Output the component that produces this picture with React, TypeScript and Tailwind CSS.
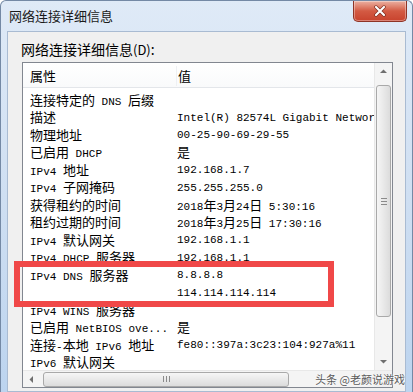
import React from 'react';

interface Row {
  name: string;
  value: string;
}

const rows: Row[] = [
  { name: '连接特定的 DNS 后缀', value: '' },
  { name: '描述', value: 'Intel(R) 82574L Gigabit Network Connection' },
  { name: '物理地址', value: '00-25-90-69-29-55' },
  { name: '已启用 DHCP', value: '是' },
  { name: 'IPv4 地址', value: '192.168.1.7' },
  { name: 'IPv4 子网掩码', value: '255.255.255.0' },
  { name: '获得租约的时间', value: '2018年3月24日 5:30:16' },
  { name: '租约过期的时间', value: '2018年3月25日 17:30:16' },
  { name: 'IPv4 默认网关', value: '192.168.1.1' },
  { name: 'IPv4 DHCP 服务器', value: '192.168.1.1' },
  { name: 'IPv4 DNS 服务器', value: '8.8.8.8' },
  { name: '', value: '114.114.114.114' },
  { name: 'IPv4 WINS 服务器', value: '' },
  { name: '已启用 NetBIOS ove...', value: '是' },
  { name: '连接-本地 IPv6 地址', value: 'fe80::397a:3c23:104:927a%11' },
  { name: 'IPv6 默认网关', value: '' },
];

const CJK = /([\u2E80-\u9FFF\uFF00-\uFFEF]+)/;

// ascii in mono, CJK runs a bit larger like the dialog's bitmap font
const Mixed: React.FC<{ text: string }> = ({ text }) => (
  <>
    {text.split(CJK).map((part, i) =>
      i % 2 === 1 ? (
        <span key={i} className="text-[13px] font-[family-name:Noto_Sans_CJK_SC,sans-serif]">
          {part}
        </span>
      ) : (
        <span key={i}>{part}</span>
      )
    )}
  </>
);

const Arrow: React.FC<{ dir: 'up' | 'down' | 'left' | 'right' }> = ({ dir }) => {
  const pts = {
    up: '5,10 8.5,6.5 12,10',
    down: '5,7 8.5,10.5 12,7',
    left: '10,5 6.5,8.5 10,12',
    right: '7,5 10.5,8.5 7,12',
  }[dir];
  return (
    <svg width="17" height="17" viewBox="0 0 17 17">
      <polygon points={pts} fill="#6f6f6f" />
    </svg>
  );
};

const App: React.FC = () => {
  return (
    <div className="relative w-[413px] h-[392px] overflow-hidden flex flex-col rounded-t-[6px] border-t border-x border-[#7489a5] bg-linear-to-b from-[#dfeaf7] via-[#cfdff2] to-[#bcd4ef] font-[family-name:Noto_Sans_CJK_SC,sans-serif] text-black">
      {/* Title bar */}
      <div className="flex h-[30px] shrink-0 items-start">
        <span className="pl-[8px] pt-[6px] text-[13px] leading-[18px] text-[#1b1b1b]">网络连接详细信息</span>
        <button className="ml-auto mr-[5px] flex h-[21px] w-[54px] items-center justify-center rounded-b-[5px] border border-t-0 border-[#8e3426] bg-linear-to-b from-[#eab0a2] via-[#d35a43] to-[#c8422d] shadow-[inset_0_0_0_1px_rgba(255,255,255,0.35)]">
          <svg width="14" height="12" viewBox="0 0 14 12">
            <path d="M3 2 L11 10 M11 2 L3 10" stroke="#7a2a1e" strokeWidth="3.4" strokeLinecap="round" />
            <path d="M3 2 L11 10 M11 2 L3 10" stroke="#ffffff" strokeWidth="2.2" strokeLinecap="round" />
          </svg>
        </button>
      </div>

      {/* Client area */}
      <div className="mx-[6px] flex-1 border border-[#a9bbd2] bg-[#f0f0f0]">
        <div className="h-[27px] pl-[13px] pt-[7px] text-[14px] leading-[20px]">
          网络连接详细信息<span className="text-[13px]">(D)</span>:
        </div>

        {/* List view */}
        <div className="ml-[14px] mt-[3px] flex h-[326px] w-[371px] flex-col border border-[#828790] bg-white">
          <div className="flex h-[307px]">
            <div className="w-[352px] overflow-hidden">
              <div className="flex h-[25px] items-center border-b border-[#e3e6ea] bg-linear-to-b from-white to-[#f9fafb] pt-[2px] text-[13px]">
                <span className="w-[154px] border-r border-[#eef0f3] pl-[7px]">属性</span>
                <span className="pl-[1px]">值</span>
              </div>
              <div className="pt-[4px] text-[11px] font-[family-name:Liberation_Mono,Noto_Sans_CJK_SC,monospace]">
                {rows.map((row, i) => (
                  <div key={i} className="flex h-[17.5px] items-center whitespace-pre leading-[17.5px]">
                    <span className="w-[154px] shrink-0 overflow-hidden pl-[7px]">
                      <Mixed text={row.name} />
                    </span>
                    <span className="whitespace-nowrap">
                      <Mixed text={row.value} />
                    </span>
                  </div>
                ))}
              </div>
            </div>

            {/* Vertical scrollbar */}
            <div className="flex w-[18px] flex-col border-l border-[#e8e8e8] bg-[#f4f4f4]">
              <div className="flex h-[17px] items-center justify-center">
                <Arrow dir="up" />
              </div>
              <div className="flex-1">
                <div className="mx-[1px] mt-[5px] flex h-[232px] items-center justify-center rounded-[3px] border border-[#a9a9a9] bg-linear-to-r from-[#f6f6f6] to-[#dcdcdc]">
                  <div className="flex flex-col gap-[2px]">
                    <div className="h-px w-[6px] bg-[#8a8a8a]" />
                    <div className="h-px w-[6px] bg-[#8a8a8a]" />
                    <div className="h-px w-[6px] bg-[#8a8a8a]" />
                  </div>
                </div>
              </div>
              <div className="flex h-[17px] items-center justify-center">
                <Arrow dir="down" />
              </div>
            </div>
          </div>

          {/* Horizontal scrollbar */}
          <div className="flex h-[17px] border-t border-[#e8e8e8] bg-[#f4f4f4]">
            <div className="flex w-[17px] items-center justify-center">
              <Arrow dir="left" />
            </div>
            <div className="flex flex-1 items-center">
              <div className="ml-[3px] flex h-[15px] w-[246px] items-center justify-center gap-[2px] rounded-[3px] border border-[#a9a9a9] bg-linear-to-b from-[#f6f6f6] to-[#dcdcdc]">
                <div className="h-[6px] w-px bg-[#8a8a8a]" />
                <div className="h-[6px] w-px bg-[#8a8a8a]" />
                <div className="h-[6px] w-px bg-[#8a8a8a]" />
              </div>
            </div>
            <div className="flex w-[17px] items-center justify-center">
              <Arrow dir="right" />
            </div>
            <div className="w-[18px] bg-[#f0f0f0]" />
          </div>
        </div>
      </div>

      {/* Highlight box drawn over the list */}
      <div className="absolute left-[13px] top-[260px] h-[46px] w-[320px] border-[6px] border-[#f04848]" />

      {/* Watermark */}
      <div className="absolute bottom-[6px] right-[7px] text-[11px] leading-[14px] text-[#5a5a5a] [text-shadow:0_0_2px_#fff,0_0_2px_#fff]">
        头条 @老颜说游戏
      </div>
    </div>
  );
};

export default App;
